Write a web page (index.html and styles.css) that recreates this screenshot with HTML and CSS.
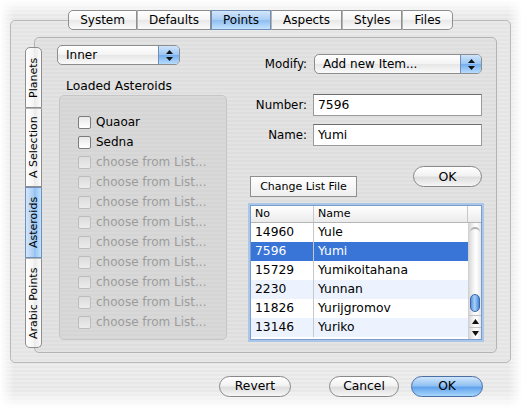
FILE: index.html
```html
<!DOCTYPE html>
<html lang="en">
<head>
  <meta charset="UTF-8">
  <title>Points</title>
  <link rel="stylesheet" href="styles.css">
</head>
<body>
  <div class="window">
    <!-- top tab strip -->
    <div class="tabbar">
      <span class="tab">System</span>
      <span class="tab">Defaults</span>
      <span class="tab selected">Points</span>
      <span class="tab">Aspects</span>
      <span class="tab">Styles</span>
      <span class="tab">Files</span>
    </div>

    <div class="tabbox">
      <div class="vtabs">
        <span class="vtab tab-planets">Planets</span>
        <span class="vtab tab-selection">A Selection</span>
        <span class="vtab tab-asteroids selected">Asteroids</span>
        <span class="vtab tab-arabic">Arabic Points</span>
      </div>

      <div class="pane">
        <div class="col-left">
          <div class="popup popup-small">
            <span class="popup-label">Inner</span>
            <span class="popup-arrows">
              <svg width="7" height="11" viewBox="0 0 7 11"><polygon points="0,4 3.5,0 7,4"/><polygon points="0,7 7,7 3.5,11"/></svg>
            </span>
          </div>
          <div class="group-title">Loaded Asteroids</div>
          <div class="group">
            <div class="check"><span class="box"></span>Quaoar</div>
            <div class="check"><span class="box"></span>Sedna</div>
            <div class="check disabled"><span class="box"></span>choose from List...</div>
            <div class="check disabled"><span class="box"></span>choose from List...</div>
            <div class="check disabled"><span class="box"></span>choose from List...</div>
            <div class="check disabled"><span class="box"></span>choose from List...</div>
            <div class="check disabled"><span class="box"></span>choose from List...</div>
            <div class="check disabled"><span class="box"></span>choose from List...</div>
            <div class="check disabled"><span class="box"></span>choose from List...</div>
            <div class="check disabled"><span class="box"></span>choose from List...</div>
            <div class="check disabled"><span class="box"></span>choose from List...</div>
          </div>
        </div>

        <div class="col-right">
          <div class="form-row">
            <span class="form-label">Modify:</span>
            <div class="popup popup-wide">
              <span class="popup-label">Add new Item...</span>
              <span class="popup-arrows">
                <svg width="7" height="11" viewBox="0 0 7 11"><polygon points="0,4 3.5,0 7,4"/><polygon points="0,7 7,7 3.5,11"/></svg>
              </span>
            </div>
          </div>
          <div class="form-row field-row">
            <span class="form-label">Number:</span>
            <span class="field">7596</span>
          </div>
          <div class="form-row field-row">
            <span class="form-label">Name:</span>
            <span class="field">Yumi</span>
          </div>

          <div class="button-row">
            <span class="bevel-btn">Change List File</span>
            <span class="pill-btn small-ok">OK</span>
          </div>

          <div class="table">
            <div class="thead">
              <span class="th col-no">No</span>
              <span class="th col-name">Name</span>
              <span class="th corner"></span>
            </div>
            <div class="tbody">
              <div class="rows">
                <div class="tr"><span class="td col-no">14960</span><span class="td col-name">Yule</span></div>
                <div class="tr selected"><span class="td col-no">7596</span><span class="td col-name">Yumi</span></div>
                <div class="tr"><span class="td col-no">15729</span><span class="td col-name">Yumikoitahana</span></div>
                <div class="tr"><span class="td col-no">2230</span><span class="td col-name">Yunnan</span></div>
                <div class="tr"><span class="td col-no">11826</span><span class="td col-name">Yurijgromov</span></div>
                <div class="tr"><span class="td col-no">13146</span><span class="td col-name">Yuriko</span></div>
              </div>
              <div class="scrollbar">
                <div class="track-cap"></div>
                <div class="thumb"></div>
                <div class="arrow arrow-up"><svg width="7" height="5" viewBox="0 0 7 5"><polygon points="0,5 3.5,0 7,5"/></svg></div>
                <div class="arrow"><svg width="7" height="5" viewBox="0 0 7 5"><polygon points="0,0 7,0 3.5,5"/></svg></div>
              </div>
            </div>
          </div>
        </div>
      </div>
    </div>

    <!-- dialog buttons -->
    <div class="actions">
      <span class="pill-btn btn-revert">Revert</span>
      <span class="pill-btn btn-cancel">Cancel</span>
      <span class="pill-btn default btn-ok">OK</span>
    </div>
  </div>
</body>
</html>
```

FILE: styles.css
```css
/* Aqua style preference sheet */
body {
  margin: 0;
  width: 522px;
  height: 408px;
  overflow: hidden;
  font-family: "DejaVu Sans", sans-serif;
  font-size: 12px;
  color: #000;
  background:
    linear-gradient(to right, #fff, rgba(255, 255, 255, 0) 14px, rgba(255, 255, 255, 0) 508px, #fff),
    linear-gradient(to bottom, #fff, rgba(255, 255, 255, 0) 16px, rgba(255, 255, 255, 0) 390px, #fff),
    repeating-linear-gradient(to bottom, #ededed 0 2px, #e7e7e7 2px 4px);
}

.window {
  padding: 10px 11px 0 10px;
}

/* top tabs */
.tabbar {
  position: relative;
  z-index: 1;
  display: flex;
  justify-content: center;
  height: 20px;
}

.tab {
  display: flex;
  align-items: center;
  padding: 0 11px;
  border: 1px solid #8e8e8e;
  border-left: 1px solid #b4b4b4;
  background: linear-gradient(#ffffff, #f4f4f4 50%, #e8e8e8 51%, #fbfbfb);
  box-sizing: border-box;
  height: 20px;
}

.tab:first-child {
  border-left: 1px solid #8e8e8e;
  border-radius: 5px 0 0 5px;
}

.tab:last-child {
  border-radius: 0 5px 5px 0;
}

.tab.selected {
  background: linear-gradient(#d3e6fb, #a9cdf5 50%, #8dbdf1 51%, #c3e2fd);
  border-color: #6f8fb8;
}

.tabbox {
  display: flex;
  align-items: flex-start;
  margin-top: -10px;
  height: 343px;
  box-sizing: border-box;
  padding: 16px 13px 9px 14px;
  border: 1px solid #b9b9b9;
  border-radius: 5px;
  background: repeating-linear-gradient(to bottom, #e9e9e9 0 2px, #e4e4e4 2px 4px);
}

/* side tabs, text runs bottom to top */
.vtabs {
  position: relative;
  z-index: 1;
  display: flex;
  flex-direction: column;
  width: 17px;
  margin-top: 10px;
  margin-right: -8px;
}

.vtab {
  writing-mode: vertical-rl;
  transform: rotate(180deg);
  box-sizing: border-box;
  width: 17px;
  font-size: 11px;
  line-height: 15px;
  text-align: center;
  border: 1px solid #8e8e8e;
  border-bottom: 1px solid #b4b4b4;
  background: linear-gradient(to left, #ffffff, #f4f4f4 50%, #e8e8e8 51%, #fbfbfb);
}

.tab-planets {
  height: 61px;
  border-bottom: 1px solid #8e8e8e;
  border-radius: 0 0 5px 5px;
}

.tab-selection {
  height: 79px;
}

.tab-asteroids {
  height: 71px;
}

.tab-arabic {
  height: 90px;
  border-radius: 5px 5px 0 0;
}

.vtab.selected {
  background: linear-gradient(to left, #d3e6fb, #a9cdf5 50%, #8dbdf1 51%, #c3e2fd);
  border-color: #6f8fb8;
}

.pane {
  display: flex;
  flex: 1;
  height: 316px;
  box-sizing: border-box;
  padding: 7px 0 0 22px;
  border: 1px solid #b4b4b4;
  border-radius: 5px;
  background: repeating-linear-gradient(to bottom, #e3e3e3 0 2px, #dedede 2px 4px);
}

.col-left {
  width: 170px;
}

.col-right {
  width: 232px;
  margin-left: 23px;
  margin-top: 9px;
}

/* popup menus */
.popup {
  display: flex;
  height: 20px;
  box-sizing: border-box;
  border: 1px solid #8d8d8d;
  border-radius: 5px;
  background: linear-gradient(#ffffff, #f3f3f3 50%, #e6e6e6 51%, #fafafa);
  overflow: hidden;
}

.popup-small {
  width: 123px;
}

.popup-wide {
  width: 168px;
}

.popup-label {
  flex: 1;
  padding-left: 8px;
  font-size: 12px;
  line-height: 18px;
}

.popup-arrows {
  display: flex;
  align-items: center;
  justify-content: center;
  width: 20px;
  border-left: 1px solid #6f8fb8;
  background: linear-gradient(#cfe3fb, #9ac6f3 50%, #74aeee 51%, #b8dcfd);
}

.popup-arrows svg {
  fill: #111;
}

.group-title {
  margin: 13px 0 0 9px;
  font-size: 12.3px;
  line-height: 16px;
}

.group {
  width: 168px;
  height: 245px;
  margin: 1px 0 0 2px;
  box-sizing: border-box;
  padding: 16px 0 0 18px;
  border: 1px solid #c6c6c6;
  border-radius: 5px;
  background: repeating-linear-gradient(to bottom, #d9d9d9 0 2px, #d5d5d5 2px 4px);
}

.check {
  display: flex;
  align-items: center;
  height: 20px;
  font-size: 12px;
}

.box {
  width: 13px;
  height: 13px;
  margin-right: 5px;
  box-sizing: border-box;
  border: 1px solid #7c7c7c;
  border-radius: 2px;
  background: linear-gradient(#e8e8e8, #ffffff);
}

.check.disabled {
  color: #9c9c9c;
}

.check.disabled .box {
  border-color: #bdbdbd;
  background: linear-gradient(#dcdcdc, #ececec);
}

/* form rows */
.form-row {
  display: flex;
  align-items: center;
  height: 20px;
}

.form-label {
  width: 57px;
  margin-right: 7px;
  font-size: 11.8px;
  text-align: right;
}

.field-row {
  height: 22px;
  margin-top: 20px;
}

.field-row + .field-row {
  margin-top: 8px;
}

.field {
  width: 169px;
  height: 22px;
  box-sizing: border-box;
  padding-left: 4px;
  font-size: 12.3px;
  line-height: 20px;
  background: #fff;
  border: 1px solid #9a9a9a;
  border-top-color: #6d6d6d;
  margin-left: -1px;
}

.button-row {
  display: flex;
  justify-content: space-between;
  align-items: flex-start;
  height: 31px;
  margin-top: 20px;
}

.bevel-btn {
  align-self: flex-end;
  width: 107px;
  height: 21px;
  box-sizing: border-box;
  font-size: 11px;
  line-height: 19px;
  text-align: center;
  border: 1px solid #8f8f8f;
  background: linear-gradient(#ffffff, #eeeeee);
}

.pill-btn {
  display: inline-block;
  height: 21px;
  box-sizing: border-box;
  line-height: 19px;
  font-size: 12.3px;
  text-align: center;
  border: 1px solid #888;
  border-radius: 11px;
  background: linear-gradient(#ffffff, #f2f2f2 45%, #dedede 55%, #f6f6f6);
}

.small-ok {
  width: 69px;
  font-size: 12.5px;
}

.pill-btn.default {
  border-color: #4a6ea6;
  background: linear-gradient(#d0e5fb, #92c2f3 45%, #62a3ec 55%, #a8d6fd);
}

/* asteroid list */
.table {
  margin-top: 8px;
  height: 135px;
  box-sizing: border-box;
  border: 1px solid #7d9ccb;
  box-shadow: 0 0 0 2px #aac7ea;
  background: #fff;
  overflow: hidden;
}

.thead {
  display: flex;
  height: 16px;
  font-size: 11px;
  line-height: 15px;
  border-bottom: 1px solid #b5b5b5;
  background: linear-gradient(#ffffff, #ebebeb);
}

.col-no {
  width: 62px;
  box-sizing: border-box;
  padding-left: 4px;
}

.col-name {
  flex: 1;
  box-sizing: border-box;
  padding-left: 4px;
  border-left: 1px solid #c8c8c8;
}

.corner {
  width: 13px;
  border-left: 1px solid #c8c8c8;
}

.tbody {
  display: flex;
  height: 116px;
}

.rows {
  flex: 1;
  font-size: 12.3px;
}

.tr {
  display: flex;
  height: 19px;
  line-height: 19px;
}

.tr:nth-child(even) {
  background: #edf3fe;
}

.tr.selected {
  background: #3875d7;
  color: #fff;
}

.scrollbar {
  display: flex;
  flex-direction: column;
  width: 13px;
  box-sizing: border-box;
  border-left: 1px solid #d0d0d0;
  background: linear-gradient(to right, #d8d8d8, #f6f6f6 40%, #ffffff 60%, #e6e6e6);
}

.track-cap {
  height: 7px;
  margin: 4px 1px 0;
  border-radius: 6px 6px 0 0;
  border-top: 2px solid #b0b0b0;
}

.thumb {
  height: 18px;
  margin: auto 1px 3px;
  box-sizing: border-box;
  border: 1px solid #3b67a8;
  border-radius: 6px;
  background: linear-gradient(to right, #5d94dd, #a7cff8 45%, #7ab2ee 70%, #4a86d6);
}

.arrow {
  display: flex;
  align-items: center;
  justify-content: center;
  height: 11px;
  border-top: 1px solid #c4c4c4;
}

.arrow svg {
  display: block;
  fill: #111;
}

/* bottom buttons */
.actions {
  display: flex;
  justify-content: flex-end;
  margin-top: 13px;
  padding-right: 28px;
}

.btn-revert {
  width: 72px;
  margin-right: 38px;
}

.btn-cancel {
  width: 70px;
  margin-right: 12px;
}

.btn-ok {
  width: 72px;
}
```
